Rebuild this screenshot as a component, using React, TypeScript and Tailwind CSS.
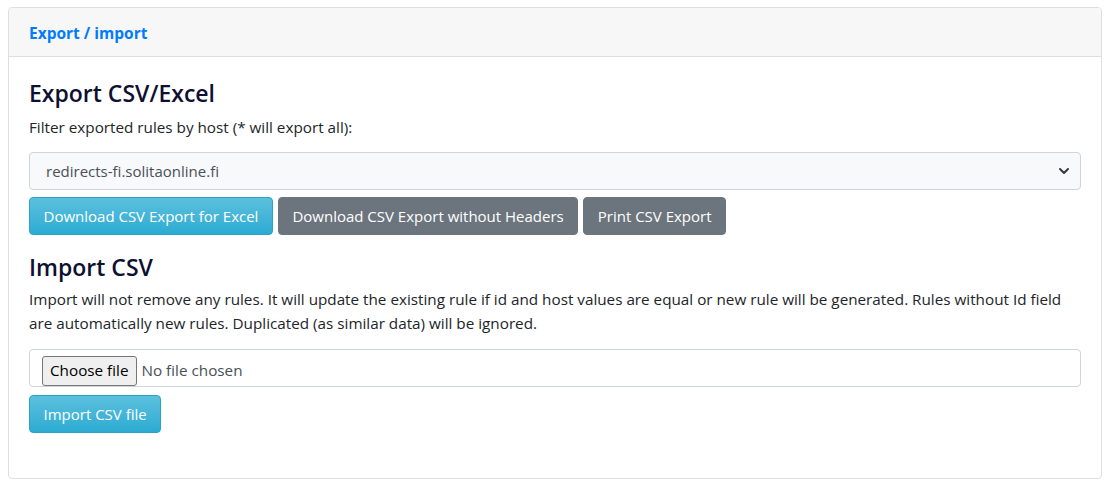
import { ChevronDown } from "lucide-react"

const font = { fontFamily: '"Open Sans", "Noto Sans", sans-serif' }

function InfoButton({ children }: { children: React.ReactNode }) {
  return (
    <button className="h-[38px] px-[13.5px] rounded-[4px] border border-[#28a4c9] bg-gradient-to-b from-[#5bc0de] to-[#2aabd2] text-white text-[15px] leading-6">
      {children}
    </button>
  )
}

function GrayButton({ children }: { children: React.ReactNode }) {
  return (
    <button className="h-[38px] px-[13.5px] rounded-[4px] border border-[#6c757d] bg-[#6c757d] text-white text-[15px] leading-6">
      {children}
    </button>
  )
}

export default function App() {
  return (
    <div className="bg-white w-[1110px] h-[487px] pt-[7px] px-[8px]" style={font}>
      <div className="border border-[#dfdfdf] rounded-[4px] h-[472px] text-[#212529]">
        <div className="h-[49px] bg-[#f7f7f7] border-b border-[#dfdfdf] rounded-t-[4px] px-5 pt-[3px] flex items-center">
          <a className="text-[#007bff] font-bold text-[15.5px]">Export / import</a>
        </div>
        <div className="px-5 pt-5">
          <h3 className="text-[23px] leading-[33px] font-semibold text-[#0d1030] mb-[5px]">Export CSV/Excel</h3>
          <p className="text-[15.25px] leading-6 mb-[13px]">Filter exported rules by host (* will export all):</p>
          <div className="h-[38px] border border-[#ced4da] rounded-[4px] bg-[#f8f9fa] flex items-center justify-between pl-4 pr-2 text-[15px] text-[#495057]">
            <span>redirects-fi.solitaonline.fi</span>
            <ChevronDown className="w-4 h-4 text-[#343a40]" strokeWidth={3} />
          </div>
          <div className="flex gap-[5px] mt-[7px]">
            <InfoButton>Download CSV Export for Excel</InfoButton>
            <GrayButton>Download CSV Export without Headers</GrayButton>
            <GrayButton>Print CSV Export</GrayButton>
          </div>
          <h3 className="text-[23px] leading-[33px] font-semibold text-[#0d1030] mt-[16px] mb-[3px]">Import CSV</h3>
          <p className="text-[15.25px] leading-6 mb-[14px]">
            Import will not remove any rules. It will update the existing rule if id and host values are equal or new rule will be generated. Rules without Id field are automatically new rules. Duplicated (as similar data) will be ignored.
          </p>
          <div className="h-[38px] border border-[#ced4da] rounded-[4px] flex items-center pl-3 text-[15.25px] text-[#495057]">
            <span className="h-[30px] mt-[5px] px-[7px] border border-[#767676] rounded-[3px] bg-[#efefef] text-black flex items-center">Choose file</span>
            <span className="ml-[5px] mt-[5px]">No file chosen</span>
          </div>
          <div className="mt-2">
            <InfoButton>Import CSV file</InfoButton>
          </div>
        </div>
      </div>
    </div>
  )
}
